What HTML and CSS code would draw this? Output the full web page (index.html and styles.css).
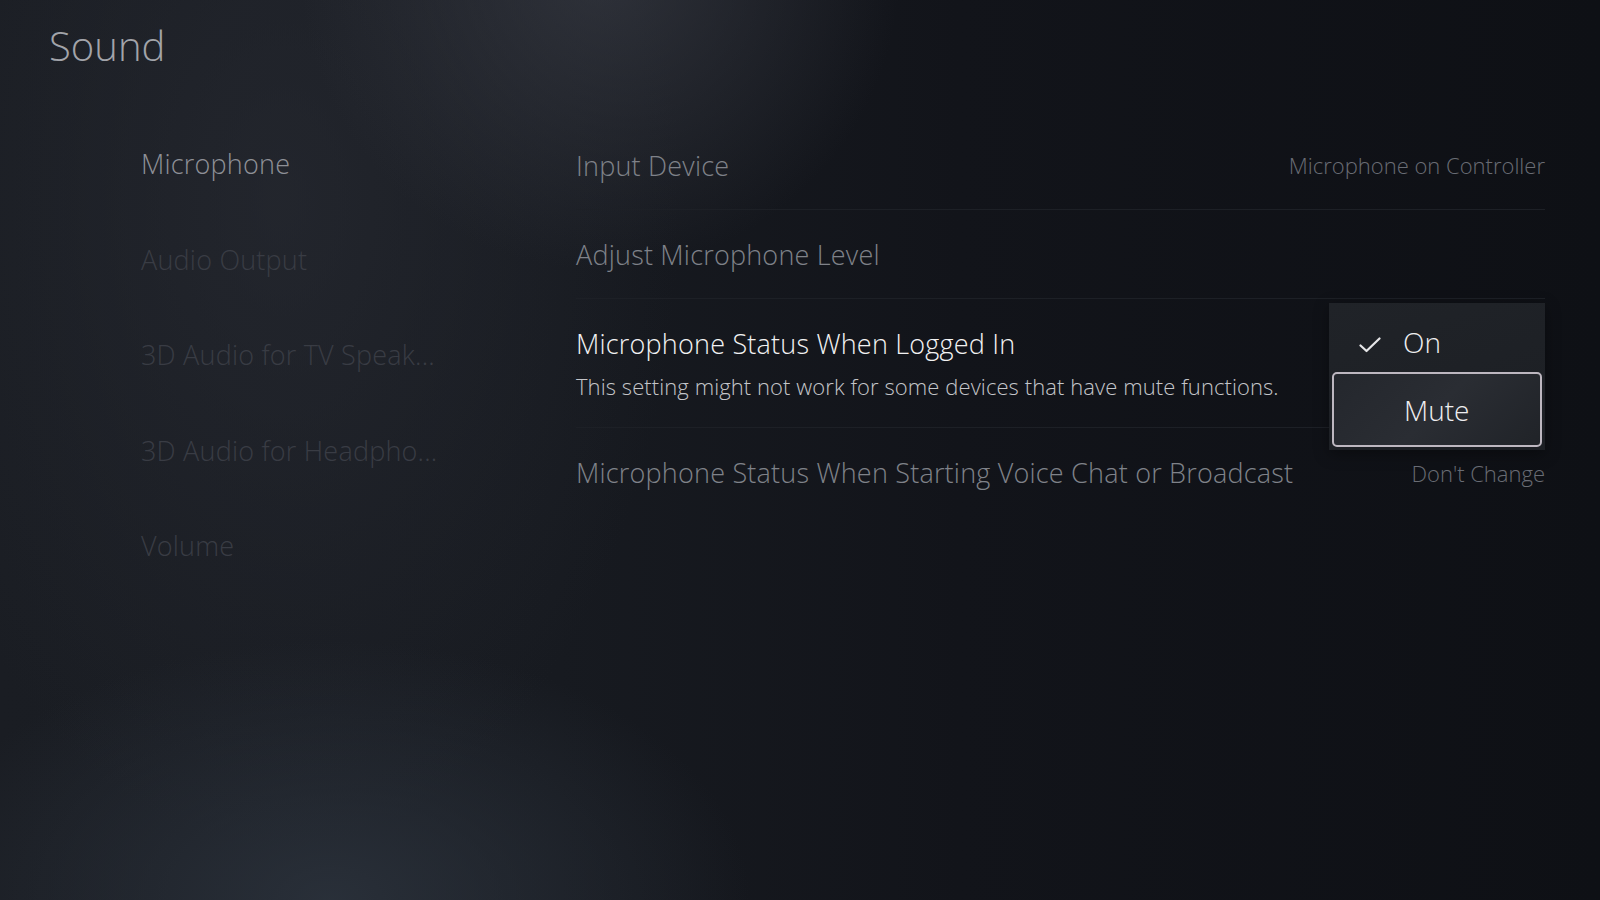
FILE: index.html
```
<!DOCTYPE html>
<html lang="en">
<head>
    <meta charset="UTF-8">
    <meta name="viewport" content="width=device-width, initial-scale=1.0">
    <title>Sound</title>
    <link rel="stylesheet" href="styles.css">
</head>
<body>

    <div class="screen">
        <h1 class="page-title">Sound</h1>

        <div class="layout">
            <ul class="side-menu">
                <li class="menu-item selected">Microphone</li>
                <li class="menu-item">Audio Output</li>
                <li class="menu-item">3D Audio for TV Speak...</li>
                <li class="menu-item">3D Audio for Headpho...</li>
                <li class="menu-item">Volume</li>
            </ul>

            <div class="settings">
                <div class="setting-row">
                    <span class="setting-label">Input Device</span>
                    <span class="setting-value">Microphone on Controller</span>
                </div>
                <div class="setting-row">
                    <span class="setting-label">Adjust Microphone Level</span>
                </div>
                <div class="setting-row focused">
                    <div class="setting-text">
                        <span class="setting-label">Microphone Status When Logged In</span>
                        <span class="setting-help">This setting might not work for some devices that have mute functions.</span>
                    </div>

                    <!-- menu déroulant ouvert -->
                    <div class="dropdown">
                        <div class="dropdown-option">
                            <svg class="check" width="22" height="16" viewBox="0 0 22 16">
                                <path d="M1.5 8.5 L7.5 14 L20.5 1.5" fill="none" stroke="#e6e6e8" stroke-width="2.2" stroke-linecap="round" stroke-linejoin="round"/>
                            </svg>
                            <span>On</span>
                        </div>
                        <div class="dropdown-option current">
                            <span>Mute</span>
                        </div>
                    </div>
                </div>
                <div class="setting-row">
                    <span class="setting-label">Microphone Status When Starting Voice Chat or Broadcast</span>
                    <span class="setting-value">Don't Change</span>
                </div>
            </div>
        </div>
    </div>

</body>
</html>
```

FILE: styles.css
```
* {
    box-sizing: border-box;
}
html, body {
    margin: 0;
    padding: 0;
}
body {
    font-family: "Open Sans", "Noto Sans", sans-serif;
    font-weight: 300;
    color: #8d9097;
    background: #12141a;
}
.screen {
    width: 1600px;
    height: 900px;
    overflow: hidden;
    background:
        radial-gradient(ellipse 300px 300px at 600px -30px, rgba(56, 59, 68, 0.7), rgba(56, 59, 68, 0) 100%),
        radial-gradient(ellipse 420px 260px at 330px 900px, rgba(44, 51, 61, 0.85), rgba(44, 51, 61, 0) 100%),
        radial-gradient(ellipse 400px 650px at 280px 200px, rgba(40, 43, 51, 0.65), rgba(40, 43, 51, 0) 100%),
        linear-gradient(90deg, #1a1d23 0%, #171a20 35%, #12141a 60%, #0e1015 100%);
}
.page-title {
    margin: 0;
    padding: 26px 0 0 49px;
    font-size: 40px;
    line-height: 1;
    font-weight: 300;
    color: #a2a4aa;
}
.layout {
    display: flex;
    padding-top: 50px;
}
.side-menu {
    list-style: none;
    margin: 0;
    padding: 0 0 0 141px;
    width: 576px;
}
.menu-item {
    height: 95.5px;
    display: flex;
    align-items: center;
    font-size: 27px;
    line-height: 1;
    color: #393c44;
    white-space: nowrap;
    letter-spacing: 0.2px;
}
.menu-item.selected {
    color: #8e9097;
}
.settings {
    width: 969px;
    padding-top: 5px;
}
.setting-row {
    position: relative;
    display: flex;
    align-items: center;
    justify-content: space-between;
    height: 89px;
    border-bottom: 1px solid #1d2026;
}
.setting-row:last-child {
    border-bottom: none;
}
.setting-row.focused {
    height: 129px;
}
.setting-label {
    font-size: 27px;
    line-height: 1;
    color: #7f8289;
    white-space: nowrap;
    letter-spacing: 0.2px;
}
.setting-value {
    font-size: 22px;
    line-height: 1;
    color: #696c74;
    white-space: nowrap;
}
.setting-text {
    display: flex;
    flex-direction: column;
    gap: 18px;
}
.focused .setting-label {
    color: #f2f2f3;
}
.setting-help {
    font-size: 22px;
    line-height: 1;
    color: #c4c5c9;
    letter-spacing: 0.08px;
}
.dropdown {
    position: absolute;
    right: 0;
    top: 4px;
    width: 216px;
    padding: 0 3px 3px 3px;
    background: linear-gradient(160deg, #202328 0%, #1c1f24 100%);
    box-shadow: 0 4px 14px rgba(0, 0, 0, 0.35);
}
.dropdown-option {
    display: flex;
    align-items: center;
    height: 69px;
    padding-left: 71px;
    padding-top: 8px;
    font-size: 28px;
    line-height: 1;
    color: #eeeef0;
    position: relative;
}
.dropdown-option .check {
    position: absolute;
    left: 27px;
    top: 34px;
}
.dropdown-option.current {
    height: 75px;
    padding-top: 0;
    padding-left: 70px;
    border: 2px solid #bdb7c0;
    border-radius: 5px;
    background: linear-gradient(135deg, #24272d 0%, #2a2d33 50%, #202328 100%);
}
```
